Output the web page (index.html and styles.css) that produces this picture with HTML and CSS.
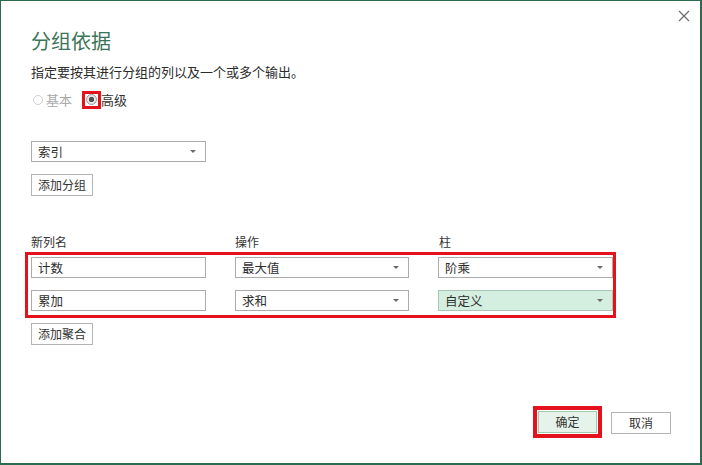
FILE: index.html
```html
<!DOCTYPE html>
<html lang="zh-CN">
<head>
<meta charset="utf-8">
<title>分组依据</title>
<link rel="stylesheet" href="styles.css">
</head>
<body>
<div class="dialog">
  <button class="close" aria-label="关闭">
    <svg width="12" height="12" viewBox="0 0 12 12"><path d="M1 1 L11 11 M11 1 L1 11" stroke="#6b6b6b" stroke-width="1.2" fill="none"/></svg>
  </button>

  <h1 class="title">分组依据</h1>
  <p class="subtitle">指定要按其进行分组的列以及一个或多个输出。</p>

  <div class="mode">
    <label class="opt opt-off"><span class="circle"></span>基本</label>
    <label class="opt"><span class="mark"><span class="circle checked"></span></span>高级</label>
  </div>

  <div class="select group-select"><span>索引</span><i class="caret"></i></div>
  <button class="btn add-btn">添加分组</button>

  <div class="heads">
    <span>新列名</span>
    <span>操作</span>
    <span>柱</span>
  </div>

  <div class="agg-frame">
    <div class="agg-grid">
      <div class="field"><span>计数</span></div>
      <div class="select"><span>最大值</span><i class="caret"></i></div>
      <div class="select"><span>阶乘</span><i class="caret"></i></div>

      <div class="field"><span>累加</span></div>
      <div class="select"><span>求和</span><i class="caret"></i></div>
      <div class="select select-hot"><span>自定义</span><i class="caret"></i></div>
    </div>
  </div>

  <button class="btn add-btn">添加聚合</button>

  <div class="footer">
    <span class="ok-frame"><button class="btn ok">确定</button></span>
    <button class="btn cancel">取消</button>
  </div>
</div>
</body>
</html>
```

FILE: styles.css
```css
* {
  box-sizing: border-box;
}

html, body {
  margin: 0;
  padding: 0;
  background: #ffffff;
}

body {
  font-family: "Noto Sans CJK SC", "Noto Sans", sans-serif;
  color: #333333;
  font-size: 12px;
}

.dialog {
  position: relative;
  width: 702px;
  height: 465px;
  border-style: solid;
  border-color: #2d6b50;
  border-width: 1px 2px 2px 1px;
  padding: 24px 29px 25px 30px;
  display: flex;
  flex-direction: column;
  align-items: flex-start;
}

.close {
  position: absolute;
  top: 8px;
  right: 9px;
  width: 14px;
  height: 14px;
  padding: 0;
  border: 0;
  background: none;
  display: flex;
  align-items: center;
  justify-content: center;
}

.title {
  margin: 0;
  font-size: 20px;
  line-height: 32px;
  font-weight: 400;
  color: #3b7458;
}

.subtitle {
  margin: 6px 0 0;
  font-size: 13px;
  line-height: 18px;
  color: #2b2b2b;
}

.mode {
  margin-top: 10px;
  display: flex;
  align-items: center;
  gap: 10px;
  height: 17px;
  font-size: 13px;
}

.opt {
  display: flex;
  align-items: center;
  gap: 3px;
  color: #333333;
}

.opt-off {
  color: #a9a9a9;
  padding-left: 2px;
}

.circle {
  display: block;
  width: 10px;
  height: 10px;
  border-radius: 50%;
  border: 1px solid #cfcfcf;
  background: #ffffff;
}

.circle.checked {
  width: 11px;
  height: 11px;
  border-color: #9a9a9a;
  background: radial-gradient(circle, #555555 0 2.4px, #e6e6e6 3px);
}

.mark {
  display: flex;
  align-items: center;
  justify-content: center;
  width: 19px;
  height: 18px;
  border: 3px solid #e3121d;
  margin-right: -3px;
}

.select,
.field {
  height: 21px;
  border: 1px solid #ababab;
  background: #ffffff;
  display: flex;
  align-items: center;
  padding: 0 6px;
  font-size: 12.5px;
  color: #2e2e2e;
}

.select span,
.field span {
  flex: 1;
}

.caret {
  width: 0;
  height: 0;
  border-left: 3px solid transparent;
  border-right: 3px solid transparent;
  border-top: 3px solid #6a6a6a;
  margin-right: 3px;
}

.group-select {
  width: 175px;
  margin-top: 33px;
}

.btn {
  font-family: inherit;
  font-size: 12px;
  color: #333333;
  background: #ffffff;
  border: 1px solid #b3b3b3;
  height: 22px;
  padding: 0;
  line-height: 20px;
  text-align: center;
}

.add-btn {
  width: 62px;
  margin-top: 12px;
}

.heads {
  margin-top: 38px;
  display: grid;
  grid-template-columns: 175px 175px 175px;
  column-gap: 29px;
  line-height: 16px;
  font-size: 12px;
  color: #333333;
}

.agg-frame {
  margin: 2px 0 0 -6px;
  border: 3px solid #e3121d;
  padding: 2px 0 4px 3px;
}

.agg-grid {
  display: grid;
  grid-template-columns: 175px 174px 175px;
  column-gap: 29px;
  row-gap: 12px;
}

.select-hot {
  background: #d4efdf;
  border-color: #a9c6b5;
}

.agg-frame + .add-btn {
  margin-top: 5px;
}

.footer {
  margin-top: auto;
  align-self: flex-end;
  display: flex;
  align-items: center;
  gap: 9px;
}

.ok-frame {
  display: flex;
  border: 4px solid #e3121d;
  padding: 1px;
}

.ok {
  width: 59px;
  background: #e5f3ea;
  border-color: #9fcaad;
}

.cancel {
  width: 60px;
  margin-top: 1px;
}
```
